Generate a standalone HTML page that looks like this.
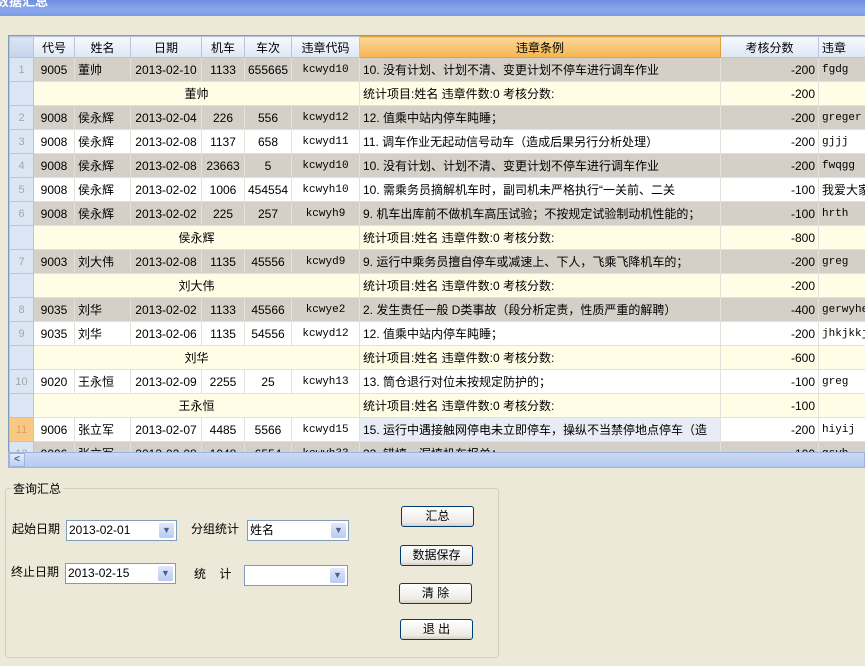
<!DOCTYPE html>
<html><head><meta charset="utf-8"><style>
*{margin:0;padding:0;box-sizing:border-box}
body{width:865px;height:666px;overflow:hidden;background:#ece9d8;font-family:"Liberation Sans","Noto Sans CJK SC",sans-serif;font-size:12px;color:#000;position:relative}
.title{position:absolute;left:0;top:0;width:865px;height:16px;background:linear-gradient(#6f8fe0,#8aa8ec 60%,#7d9ae6);color:#fff;font-weight:bold;font-size:13px;line-height:10px;padding-left:0;overflow:hidden}
.title span{position:relative;top:-3px;left:-4px}
.grid{position:absolute;left:8px;top:35px;width:857px;height:417px;overflow:hidden;background:#fff;border-left:1px solid #7f9db9;border-top:1px solid #7f9db9}
table{border-collapse:collapse;table-layout:fixed;width:880px}
td,th{height:24px;border:1px solid #e4e1d8;white-space:nowrap;overflow:hidden;padding:0 3px;font-weight:normal}
th{height:21px;background:linear-gradient(#f7f9fd,#dde6f4);border:1px solid #b8c6dc;font-size:12px}
th.sel{background:linear-gradient(#fbd79a,#f5b550);border-color:#e0a040}
td.rn{background:#dbe6f4;color:#9aa;text-align:center;border-color:#b8c6dc;font-size:11px}
td.rn.cur{background:#f9c983;color:#d9a060}
tr.g td{background:#d4d0c8}
tr.w td{background:#fff}
tr.s td{background:#fffde6}
tr td.rn{background:#dbe6f4}
.c{text-align:center}.r{text-align:right}
.m{font-family:"Liberation Mono","Noto Serif CJK SC",monospace;font-size:11px}
.hs{position:absolute;left:8px;top:452px;width:857px;height:16px;background:linear-gradient(#cbd9f5,#b6caf1);border:1px solid #9eb4de}
.hs .b{position:absolute;left:0;top:0;width:16px;height:14px;background:linear-gradient(#e2ebfc,#bcd0f4);border:1px solid #9eb4de;font-size:10px;color:#4d6185;text-align:center;line-height:12px;font-weight:bold}
.gb{position:absolute;left:5px;top:488px;width:494px;height:170px;border:1px solid #d0d0bf;border-radius:3px}
.lg{position:absolute;left:11px;top:480px;background:#ece9d8;padding:0 2px}
.lb{position:absolute}
.cb{position:absolute;height:21px;background:#fff;border:1px solid #7f9db9;padding-left:2px;line-height:18px}
.cb i{position:absolute;right:2px;top:2px;width:15px;height:15px;background:linear-gradient(#e0e8fb,#b8cbf1);border-radius:2px;font-style:normal;color:#4d6185;font-size:9px;text-align:center;line-height:15px}
.bt{position:absolute;width:73px;height:21px;border:1px solid #003c74;border-radius:3px;background:linear-gradient(#fff,#ecebe6 80%,#d6d0c5);text-align:center;line-height:18px}
</style></head><body>
<div class="title"><span>数据汇总</span></div>
<div class="grid"><table>
<colgroup><col style="width:24px"><col style="width:41px"><col style="width:56px"><col style="width:71px"><col style="width:43px"><col style="width:47px"><col style="width:68px"><col style="width:361px"><col style="width:98px"><col style="width:71px"></colgroup>
<tr><th style="background:linear-gradient(#dbe6f4,#c3d3ea)"></th><th>代号</th><th>姓名</th><th>日期</th><th>机车</th><th>车次</th><th>违章代码</th><th class="sel">违章条例</th><th>考核分数</th><th style="text-align:left">违章</th></tr>
<tr class="g"><td class="rn">1</td><td class="c">9005</td><td>董帅</td><td class="c">2013-02-10</td><td class="c">1133</td><td class="c">655665</td><td class="c m">kcwyd10</td><td>10. 没有计划、计划不清、变更计划不停车进行调车作业</td><td class="r">-200</td><td class="m">fgdg</td></tr>
<tr class="s"><td class="rn"></td><td colspan="6" class="c">董帅</td><td>统计项目:姓名 违章件数:0 考核分数:</td><td class="r">-200</td><td></td></tr>
<tr class="g"><td class="rn">2</td><td class="c">9008</td><td>侯永辉</td><td class="c">2013-02-04</td><td class="c">226</td><td class="c">556</td><td class="c m">kcwyd12</td><td>12. 值乘中站内停车盹睡；</td><td class="r">-200</td><td class="m">greger</td></tr>
<tr class="w"><td class="rn">3</td><td class="c">9008</td><td>侯永辉</td><td class="c">2013-02-08</td><td class="c">1137</td><td class="c">658</td><td class="c m">kcwyd11</td><td>11. 调车作业无起动信号动车（造成后果另行分析处理）</td><td class="r">-200</td><td class="m">gjjj</td></tr>
<tr class="g"><td class="rn">4</td><td class="c">9008</td><td>侯永辉</td><td class="c">2013-02-08</td><td class="c">23663</td><td class="c">5</td><td class="c m">kcwyd10</td><td>10. 没有计划、计划不清、变更计划不停车进行调车作业</td><td class="r">-200</td><td class="m">fwqgg</td></tr>
<tr class="w"><td class="rn">5</td><td class="c">9008</td><td>侯永辉</td><td class="c">2013-02-02</td><td class="c">1006</td><td class="c">454554</td><td class="c m">kcwyh10</td><td>10. 需乘务员摘解机车时，副司机未严格执行“一关前、二关</td><td class="r">-100</td><td>我爱大家</td></tr>
<tr class="g"><td class="rn">6</td><td class="c">9008</td><td>侯永辉</td><td class="c">2013-02-02</td><td class="c">225</td><td class="c">257</td><td class="c m">kcwyh9</td><td>9. 机车出库前不做机车高压试验；不按规定试验制动机性能的；</td><td class="r">-100</td><td class="m">hrth</td></tr>
<tr class="s"><td class="rn"></td><td colspan="6" class="c">侯永辉</td><td>统计项目:姓名 违章件数:0 考核分数:</td><td class="r">-800</td><td></td></tr>
<tr class="g"><td class="rn">7</td><td class="c">9003</td><td>刘大伟</td><td class="c">2013-02-08</td><td class="c">1135</td><td class="c">45556</td><td class="c m">kcwyd9</td><td>9. 运行中乘务员擅自停车或减速上、下人，飞乘飞降机车的；</td><td class="r">-200</td><td class="m">greg</td></tr>
<tr class="s"><td class="rn"></td><td colspan="6" class="c">刘大伟</td><td>统计项目:姓名 违章件数:0 考核分数:</td><td class="r">-200</td><td></td></tr>
<tr class="g"><td class="rn">8</td><td class="c">9035</td><td>刘华</td><td class="c">2013-02-02</td><td class="c">1133</td><td class="c">45566</td><td class="c m">kcwye2</td><td>2. 发生责任一般 D类事故（段分析定责，性质严重的解聘）</td><td class="r">-400</td><td class="m">gerwyhey</td></tr>
<tr class="w"><td class="rn">9</td><td class="c">9035</td><td>刘华</td><td class="c">2013-02-06</td><td class="c">1135</td><td class="c">54556</td><td class="c m">kcwyd12</td><td>12. 值乘中站内停车盹睡；</td><td class="r">-200</td><td class="m">jhkjkkjl</td></tr>
<tr class="s"><td class="rn"></td><td colspan="6" class="c">刘华</td><td>统计项目:姓名 违章件数:0 考核分数:</td><td class="r">-600</td><td></td></tr>
<tr class="w"><td class="rn">10</td><td class="c">9020</td><td>王永恒</td><td class="c">2013-02-09</td><td class="c">2255</td><td class="c">25</td><td class="c m">kcwyh13</td><td>13. 筒仓退行对位未按规定防护的；</td><td class="r">-100</td><td class="m">greg</td></tr>
<tr class="s"><td class="rn"></td><td colspan="6" class="c">王永恒</td><td>统计项目:姓名 违章件数:0 考核分数:</td><td class="r">-100</td><td></td></tr>
<tr class="w"><td class="rn cur">11</td><td class="c">9006</td><td>张立军</td><td class="c">2013-02-07</td><td class="c">4485</td><td class="c">5566</td><td class="c m">kcwyd15</td><td style="background:#e8ecf4">15. 运行中遇接触网停电未立即停车，操纵不当禁停地点停车（造</td><td class="r">-200</td><td class="m">hiyij</td></tr>
<tr class="g"><td class="rn">12</td><td class="c">9006</td><td>张立军</td><td class="c">2013-02-08</td><td class="c">1048</td><td class="c">6554</td><td class="c m">kcwyh33</td><td>33. 错填、漏填机车报单；</td><td class="r">-100</td><td class="m">gsvh</td></tr>
</table></div>
<div class="hs"><div class="b">&lt;</div></div>
<div class="gb"></div>
<div class="lg">查询汇总</div>
<div class="lb" style="left:12px;top:520px">起始日期</div>
<div class="cb" style="left:66px;top:520px;width:111px">2013-02-01<i>▼</i></div>
<div class="lb" style="left:191px;top:520px">分组统计</div>
<div class="cb" style="left:247px;top:520px;width:102px">姓名<i>▼</i></div>
<div class="lb" style="left:11px;top:563px">终止日期</div>
<div class="cb" style="left:65px;top:563px;width:111px">2013-02-15<i>▼</i></div>
<div class="lb" style="left:194px;top:565px">统&nbsp;&nbsp;&nbsp;&nbsp;计</div>
<div class="cb" style="left:244px;top:565px;width:104px"><i>▼</i></div>
<div class="bt" style="left:401px;top:506px">汇总</div>
<div class="bt" style="left:400px;top:545px">数据保存</div>
<div class="bt" style="left:399px;top:583px">清 除</div>
<div class="bt" style="left:400px;top:619px">退 出</div>
</body></html>
